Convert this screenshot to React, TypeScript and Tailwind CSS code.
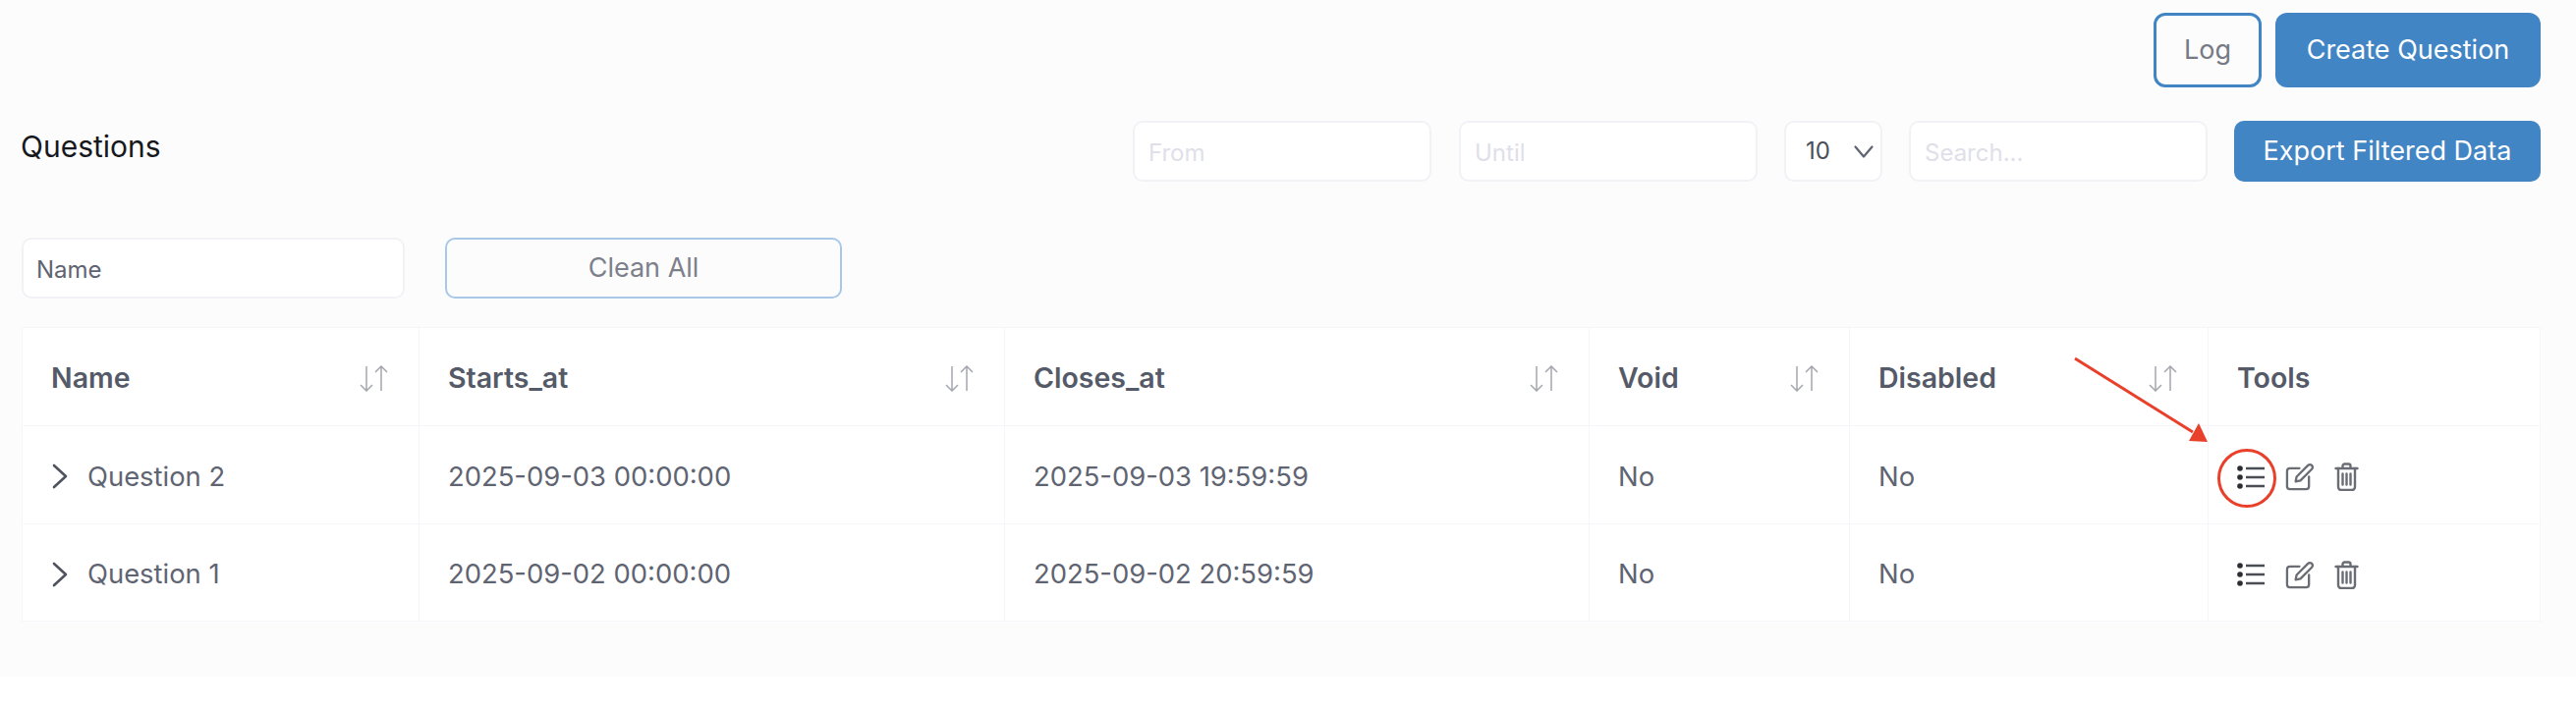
const font = "font-['Inter',sans-serif]";

const SortIcon = () => (
  <svg width="30" height="27" viewBox="0 0 30 27" fill="none" stroke="#a4a7ae" strokeWidth="1.5" className="shrink-0">
    <path d="M7 1v25M1 20l6 6 6-6" />
    <path d="M22 26V1M16 7l6-6 6 6" />
  </svg>
);

const RowChevron = () => (
  <svg width="16" height="26" viewBox="0 0 16 26" fill="none" stroke="#4f535f" strokeWidth="2.6" strokeLinecap="round" strokeLinejoin="round" className="shrink-0 ml-[1px]">
    <path d="M2 2l12 11L2 24" />
  </svg>
);

const SelectChevron = () => (
  <svg width="20" height="13" viewBox="0 0 20 13" fill="none" stroke="#5f6472" strokeWidth="2.2" strokeLinecap="round" strokeLinejoin="round">
    <path d="M1.5 1.5L10 11.5l8.5-10" />
  </svg>
);

const ListIcon = () => (
  <svg width="28" height="24" viewBox="0 0 28 24" fill="none" stroke="#4a4d54" strokeWidth="2.4">
    <path d="M9 3h19M9 12h19M9 21h19" />
    <circle cx="3" cy="3" r="2.8" fill="#2b2d33" stroke="none" />
    <circle cx="3" cy="12" r="2.8" fill="#2b2d33" stroke="none" />
    <circle cx="3" cy="21" r="2.8" fill="#2b2d33" stroke="none" />
  </svg>
);

const EditIcon = () => (
  <svg width="29" height="29" viewBox="0 0 30 30" fill="none" stroke="#6a6d74" strokeWidth="2.4" strokeLinecap="round" strokeLinejoin="round">
    <path d="M15 6H5a3 3 0 0 0-3 3v16a3 3 0 0 0 3 3h17a3 3 0 0 0 3-3V15" />
    <path d="M11 20l1-5L24 3a2.6 2.6 0 0 1 4 4L16 19z" />
  </svg>
);

const TrashIcon = () => (
  <svg width="25" height="29" viewBox="0 0 25 29" fill="none" stroke="#6a6d74" strokeWidth="2.4" strokeLinecap="round" strokeLinejoin="round">
    <path d="M1.5 6h22M8.5 6V3.5a2 2 0 0 1 2-2h4a2 2 0 0 1 2 2V6" />
    <path d="M4 6v19a3 3 0 0 0 3 3h11a3 3 0 0 0 3-3V6" />
    <path d="M8.5 11.5v11M12.5 11.5v11M16.5 11.5v11" />
  </svg>
);

const columns = [
  { label: "Name", width: "w-[404px]", sort: true },
  { label: "Starts_at", width: "w-[596px]", sort: true },
  { label: "Closes_at", width: "w-[595px]", sort: true },
  { label: "Void", width: "w-[265px]", sort: true },
  { label: "Disabled", width: "w-[365px]", sort: true },
  { label: "Tools", width: "", sort: false },
];

const rows = [
  { name: "Question 2", starts: "2025-09-03 00:00:00", closes: "2025-09-03 19:59:59" },
  { name: "Question 1", starts: "2025-09-02 00:00:00", closes: "2025-09-02 20:59:59" },
];

const cell = "h-[100px] border-r border-b border-[#f5f5fa] pl-[29px] pr-[30px] pt-[4px] text-[27.4px] text-[#5f6472] font-normal last:border-r-0";

const TextInput = ({ placeholder }: { placeholder: string }) => (
  <input
    placeholder={placeholder}
    className="w-[304px] h-[62px] bg-white border-2 border-[#f2f2f6] rounded-[10px] px-[14px] pt-[2px] text-[24px] placeholder:text-[#e0e0ea] outline-none"
  />
);

export default function App() {
  return (
    <div className={`${font} min-h-[722px] bg-white`}>
      <div className="relative h-[689px] bg-[#fcfcfd] pl-[22px] pr-[36px]">
        <div className="flex justify-end gap-[14px] pt-[13px]">
          <button className="w-[110px] h-[76px] border-[3px] border-[#4285c4] rounded-[12px] text-[27px] text-[#767a85]">
            Log
          </button>
          <button className="w-[270px] h-[76px] bg-[#4285c4] rounded-[12px] text-[27px] text-white">
            Create Question
          </button>
        </div>

        <div className="flex items-start justify-between pt-[34px]">
          <h2 className="text-[30px] leading-[52px] -ml-[1px] text-[#17181c]">Questions</h2>
          <div className="flex">
            <TextInput placeholder="From" />
            <div className="w-[28px]" />
            <TextInput placeholder="Until" />
            <div className="w-[27px]" />
            <div className="w-[100px] h-[62px] bg-white border-2 border-[#f2f2f6] rounded-[10px] flex items-center justify-between pl-[20px] pr-[7px] text-[24px] text-[#4b4e58]">
              10
              <SelectChevron />
            </div>
            <div className="w-[27px]" />
            <TextInput placeholder="Search..." />
            <div className="w-[27px]" />
            <button className="w-[312px] h-[62px] bg-[#4285c4] rounded-[10px] text-[27px] text-white">
              Export Filtered Data
            </button>
          </div>
        </div>

        <div className="flex gap-[41px] pt-[57px]">
          <input
            defaultValue="Name"
            className="w-[390px] h-[62px] bg-white border-2 border-[#f2f2f6] rounded-[10px] pl-[13px] pr-[14px] pt-[2px] text-[24px] text-[#5f6472] outline-none"
          />
          <button className="w-[404px] h-[62px] border-2 border-[#a9c8e8] rounded-[10px] text-[27px] text-[#7c808b]">
            Clean All
          </button>
        </div>

        <table className="mt-[29px] w-full table-fixed border-separate border-spacing-0 bg-white border border-[#f5f5fa]">
          <thead>
            <tr>
              {columns.map((c) => (
                <th key={c.label} className={`${c.width} ${cell} text-left`}>
                  <div className="flex items-center justify-between text-[28.5px] font-semibold text-[#555a68]">
                    {c.label}
                    {c.sort && <SortIcon />}
                  </div>
                </th>
              ))}
            </tr>
          </thead>
          <tbody>
            {rows.map((r) => (
              <tr key={r.name} className="[&:last-child>td]:h-[98px] [&:last-child>td]:border-b-0">
                <td className={cell}>
                  <div className="flex items-center gap-[20px]">
                    <RowChevron />
                    {r.name}
                  </div>
                </td>
                <td className={cell}>{r.starts}</td>
                <td className={cell}>{r.closes}</td>
                <td className={cell}>No</td>
                <td className={cell}>No</td>
                <td className={cell}>
                  <div className="flex items-center gap-[21px]">
                    <ListIcon />
                    <EditIcon />
                    <TrashIcon />
                  </div>
                </td>
              </tr>
            ))}
          </tbody>
        </table>

        {/* annotation drawn on top of the screenshot */}
        <svg className="absolute left-[2100px] top-[355px]" width="240" height="170" viewBox="2100 355 240 170" fill="none">
          <path d="M2112 365L2232 440" stroke="#e8402a" strokeWidth="3" />
          <path d="M2247 450L2228 449L2238 431z" fill="#e8402a" />
          <circle cx="2287" cy="487" r="28.5" stroke="#e8402a" strokeWidth="3" />
        </svg>
      </div>
    </div>
  );
}
